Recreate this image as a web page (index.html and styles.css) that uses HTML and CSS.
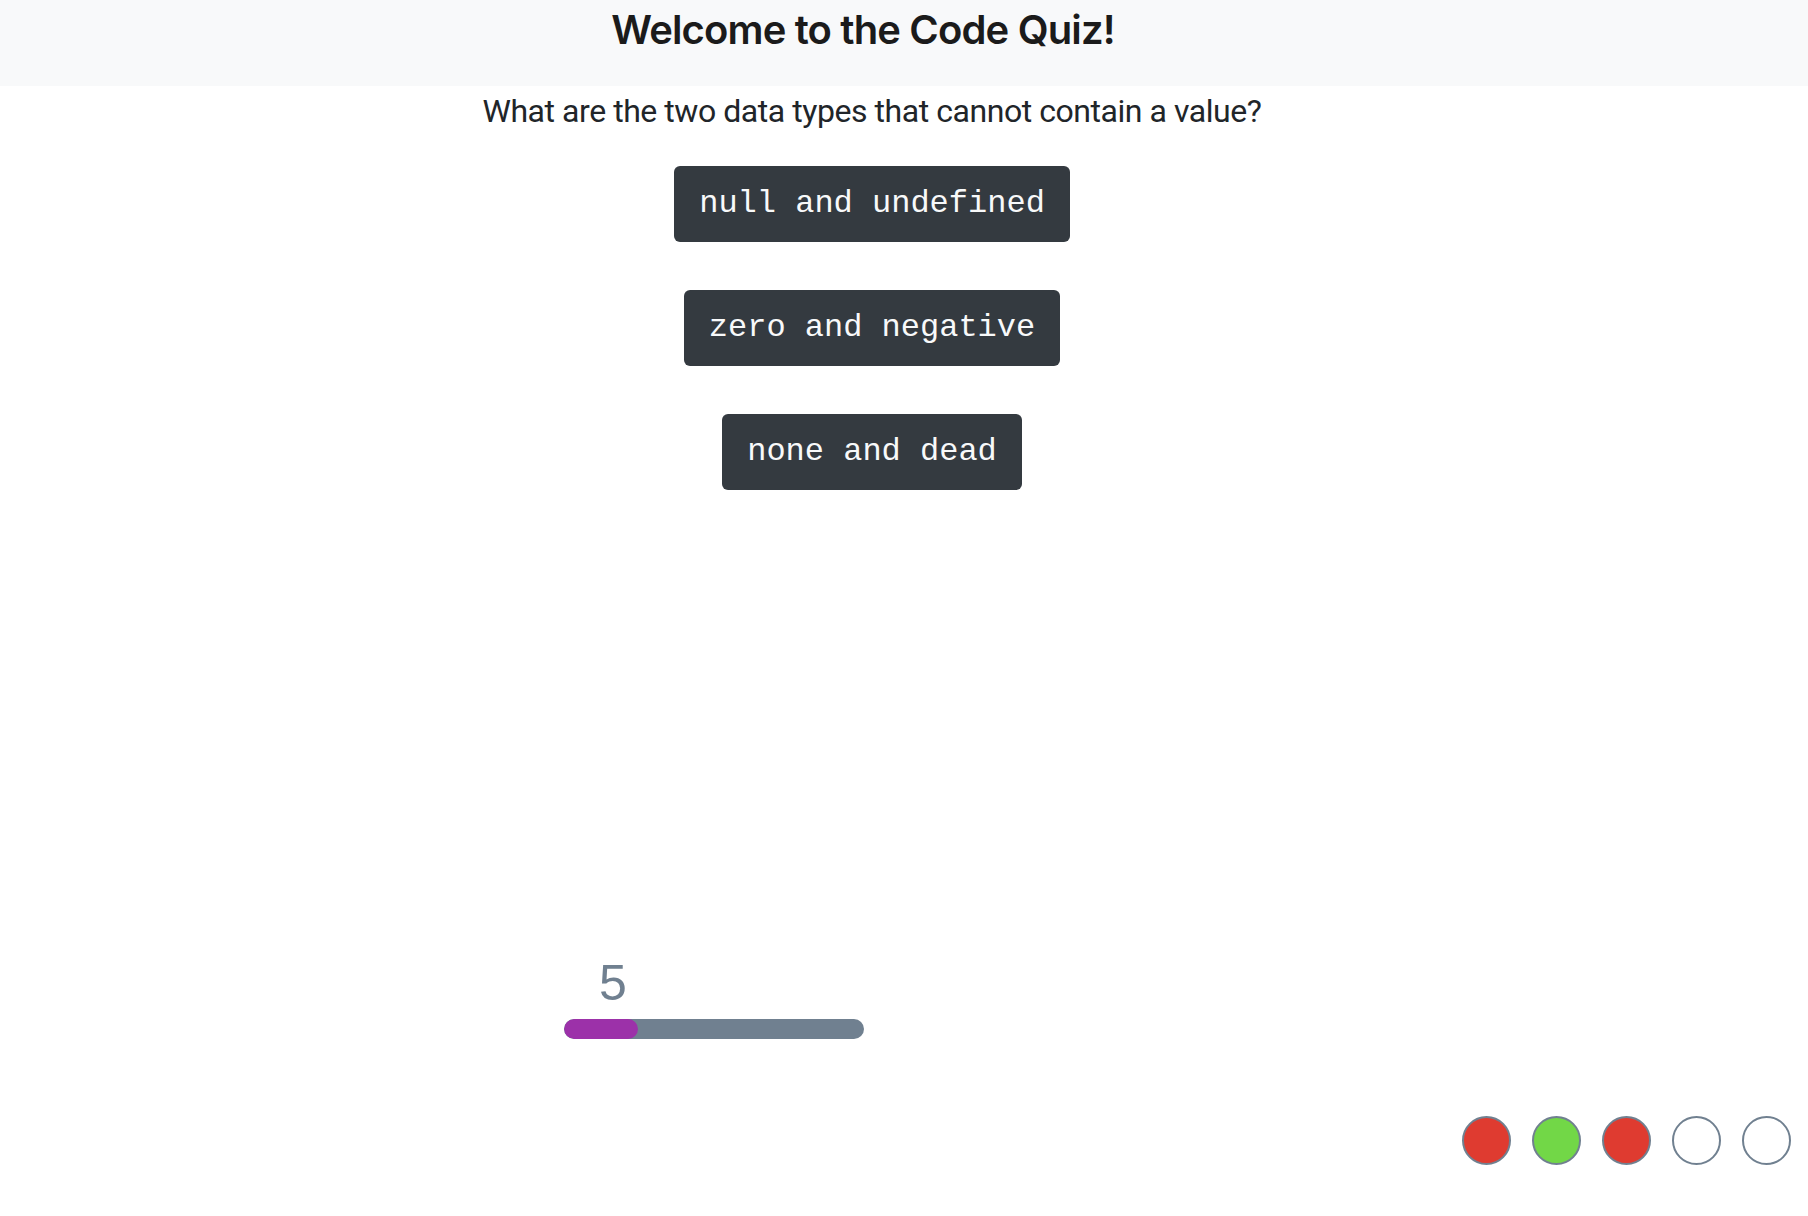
FILE: index.html
```html
<!DOCTYPE html>
<html lang="en">
<head>
<meta charset="utf-8">
<title>Code Quiz</title>
<link rel="stylesheet" href="styles.css">
</head>
<body>
<header class="site-header">
  <h1 class="site-title">Welcome to the Code Quiz!</h1>
</header>
<main class="quiz">
  <p class="question">What are the two data types that cannot contain a value?</p>
  <div class="answers">
    <button class="answer">null and undefined</button>
    <button class="answer">zero and negative</button>
    <button class="answer">none and dead</button>
  </div>
</main>
<section class="timer">
  <div class="timer-count">5</div>
  <div class="timer-track"><div class="timer-fill" style="width: 74px"></div></div>
</section>
<footer class="results">
  <span class="dot dot-wrong"></span>
  <span class="dot dot-right"></span>
  <span class="dot dot-wrong"></span>
  <span class="dot"></span>
  <span class="dot"></span>
</footer>
</body>
</html>
```

FILE: styles.css
```css
* { box-sizing: border-box; }

html, body {
  margin: 0;
  padding: 0;
  background: #ffffff;
}

body {
  font-family: Roboto, "Noto Sans", "Liberation Sans", sans-serif;
  color: #212529;
  line-height: 1.5;
}

.site-header {
  background: #f8f9fa;
  height: 86px;
  padding: 6px 82px 0 0;
  text-align: center;
}

.site-title {
  margin: 0;
  font-family: Inter, Roboto, "Liberation Sans", sans-serif;
  font-size: 40px;
  font-weight: 600;
  letter-spacing: -0.85px;
  line-height: 48px;
  color: #1b1b1b;
}

.quiz {
  padding-right: 64px;
  text-align: center;
}

.question {
  margin: 0;
  padding-top: 1px;
  font-size: 32px;
  line-height: 48px;
  font-weight: 400;
  letter-spacing: -0.45px;
}

.answers {
  margin-top: 31px;
  display: flex;
  flex-direction: column;
  align-items: center;
  gap: 48px;
}

.answer {
  font-family: "Liberation Mono", "Courier New", monospace;
  font-size: 32px;
  line-height: 48px;
  padding: 14px 25px;
  border: 0;
  border-radius: 6px;
  background: #343a40;
  color: #f8f9fa;
  cursor: pointer;
}

.timer {
  margin: 463px 0 0 564px;
  width: 300px;
}

.timer-count {
  font-family: "Liberation Sans", Arial, sans-serif;
  font-size: 50px;
  line-height: 60px;
  color: #708090;
  padding-left: 35px;
}

.timer-track {
  margin-top: 6px;
  height: 20px;
  border-radius: 10px;
  background: #708090;
  overflow: hidden;
}

.timer-fill {
  height: 100%;
  border-radius: 10px;
  background: #9c31a9;
}

.results {
  margin-top: 77px;
  display: flex;
  justify-content: flex-end;
  gap: 21px;
  padding-right: 17px;
}

.dot {
  width: 49px;
  height: 49px;
  border-radius: 50%;
  border: 2px solid #708090;
  background: #ffffff;
}

.dot-wrong { background: #df3b30; }
.dot-right { background: #72d747; }
```
